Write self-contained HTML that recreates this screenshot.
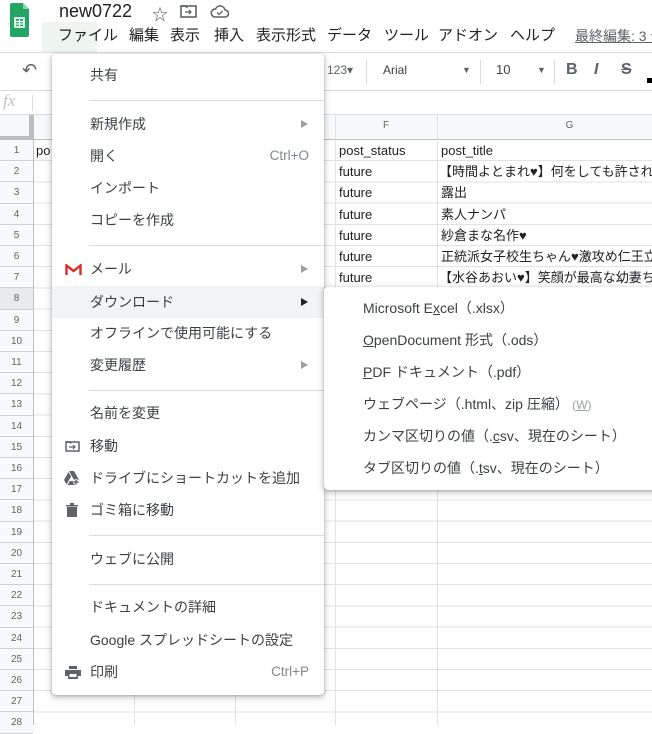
<!DOCTYPE html>
<html><head><meta charset="utf-8"><style>
*{margin:0;padding:0;box-sizing:border-box}
body{width:652px;height:725px;overflow:hidden;background:#fff;font-family:"Liberation Sans","Noto Sans CJK JP",sans-serif;position:relative;color:#202124}
.abs{position:absolute}
.mb{position:absolute;top:26px;font-size:15px;line-height:20px;white-space:nowrap;color:#202124}
.grid{position:absolute;left:0;top:140px;width:652px;height:585px;
background-image:repeating-linear-gradient(to bottom,transparent 0,transparent 20.2px,#e2e2e2 20.2px,#e2e2e2 21.2px);}
.vl{position:absolute;top:115px;bottom:0;width:1px;background:#e2e2e2}
.rn{position:absolute;left:0;width:33px;height:21.2px;line-height:21.2px;text-align:center;font-size:10px;color:#5f6368;background:#f8f9fa;border-bottom:1px solid #d0d0d0}
.cell{position:absolute;font-size:13px;line-height:21.2px;height:21.2px;white-space:nowrap;overflow:hidden}
.menu{position:absolute;left:52px;top:54px;width:272px;height:641px;background:#fff;box-shadow:0 2px 6px 2px rgba(60,64,67,.2),0 1px 2px rgba(60,64,67,.3);border-radius:4px}
.it{position:absolute;left:0;width:272px;height:32px;line-height:32px;font-size:14px;color:#3c4043;padding-left:38px}
.sc{position:absolute;right:15px;top:0;color:#80868b;font-size:13.5px}
.ar{position:absolute;right:16px;top:12px;width:0;height:0;border-left:7px solid #9aa0a6;border-top:4px solid transparent;border-bottom:4px solid transparent}
.sep{position:absolute;left:37px;right:0;height:1px;background:#dadce0}
.sub{position:absolute;left:324px;top:287px;width:340px;height:203px;background:#fff;box-shadow:0 2px 6px 2px rgba(60,64,67,.2),0 1px 2px rgba(60,64,67,.3);border-radius:4px}
.si{position:absolute;left:39px;font-size:14px;color:#3c4043;line-height:32px;white-space:nowrap}
u{text-decoration:underline}
</style></head><body>
<svg class="abs" style="left:10px;top:3px" width="19" height="34" viewBox="0 0 19 34"><path d="M2 0h11l6 6v26a2 2 0 0 1-2 2H2a2 2 0 0 1-2-2V2a2 2 0 0 1 2-2z" fill="#23a566"/><path d="M13 0l6 6h-6z" fill="#8ed1b1"/><rect x="5" y="15" width="9" height="9" fill="none" stroke="#fff" stroke-width="1.6"/><path d="M5 18.5h9M5 21h9M9.5 15v9" stroke="#fff" stroke-width="1.2"/></svg>
<div class="abs" style="left:59px;top:0px;font-size:18px;color:#202124;line-height:22px">new0722</div>
<div class="abs" style="left:152px;top:1px;font-size:16px;color:#5f6368">☆</div>
<svg class="abs" style="left:180px;top:4px" width="17" height="14"><rect x="1" y="2" width="15" height="11" fill="none" stroke="#5f6368" stroke-width="1.6"/><path d="M1 2h5l1 2" stroke="#5f6368" fill="none" stroke-width="1.6"/><path d="M5 8h6M9 6l2 2-2 2" stroke="#5f6368" fill="none" stroke-width="1.3"/></svg>
<svg class="abs" style="left:210px;top:4px" width="19" height="14"><path d="M5 13h10a3.5 3.5 0 0 0 0-7 5 5 0 0 0-9.5-1A4 4 0 0 0 5 13z" fill="none" stroke="#5f6368" stroke-width="1.6"/><path d="M7 8.5l2 2 3.5-3.5" stroke="#5f6368" fill="none" stroke-width="1.3"/></svg>
<div class="abs" style="left:42px;top:22px;width:55px;height:30px;background:#eef5f0"></div>
<div class="mb" style="left:58px">ファイル</div>
<div class="mb" style="left:129px">編集</div>
<div class="mb" style="left:170px">表示</div>
<div class="mb" style="left:214px">挿入</div>
<div class="mb" style="left:256px">表示形式</div>
<div class="mb" style="left:327px">データ</div>
<div class="mb" style="left:384px">ツール</div>
<div class="mb" style="left:438px">アドオン</div>
<div class="mb" style="left:510px">ヘルプ</div>
<div class="mb" style="left:575px;font-size:14px;color:#5f6368;text-decoration:underline">最終編集: 3 分前</div>
<div class="abs" style="left:0;top:52px;width:652px;height:1px;background:#dadce0"></div>
<div class="abs" style="left:22px;top:60px;font-size:18px;color:#5f6368">↶</div>
<div class="abs" style="left:327px;top:63px;font-size:12px;color:#5f6368">123▾</div>
<div class="abs" style="left:366px;top:60px;width:1px;height:24px;background:#dadce0"></div>
<div class="abs" style="left:383px;top:63px;font-size:12px;color:#3c4043">Arial</div>
<div class="abs" style="left:462px;top:65px;font-size:9px;color:#5f6368">▼</div>
<div class="abs" style="left:480px;top:60px;width:1px;height:24px;background:#dadce0"></div>
<div class="abs" style="left:496px;top:62px;font-size:13px;color:#3c4043">10</div>
<div class="abs" style="left:537px;top:65px;font-size:9px;color:#5f6368">▼</div>
<div class="abs" style="left:554px;top:60px;width:1px;height:24px;background:#dadce0"></div>
<div class="abs" style="left:566px;top:61px;font-size:16px;font-weight:bold;color:#5f6368">B</div>
<div class="abs" style="left:594px;top:61px;font-size:16px;font-style:italic;font-weight:bold;color:#5f6368">I</div>
<div class="abs" style="left:621px;top:61px;font-size:16px;font-weight:bold;color:#5f6368;text-decoration:line-through">S</div>
<div class="abs" style="left:647px;top:78px;width:5px;height:5px;background:#000"></div>
<div class="abs" style="left:0;top:90px;width:652px;height:1px;background:#dadce0"></div>
<div class="abs" style="left:3px;top:91px;font-size:17px;font-style:italic;color:#bdc1c6;font-family:'Liberation Serif',serif">fx</div>
<div class="abs" style="left:32px;top:95px;width:1px;height:16px;background:#dadce0"></div>
<div class="abs" style="left:0;top:114px;width:652px;height:1px;background:#dadce0"></div>
<div class="abs" style="left:0;top:115px;width:652px;height:25px;background:#f8f9fa;border-bottom:1px solid #c0c0c0"></div>
<div class="abs" style="left:29px;top:115px;width:4px;height:25px;background:#bdbdbd"></div>
<div class="abs" style="left:0;top:136px;width:33px;height:4px;background:#bdbdbd"></div>
<div class="abs" style="left:335px;top:120px;width:102px;text-align:center;font-size:10px;color:#5f6368">F</div>
<div class="abs" style="left:437px;top:120px;width:265px;text-align:center;font-size:10px;color:#5f6368">G</div>
<div class="grid"></div>
<div class="vl" style="left:33px;background:#c0c0c0"></div>
<div class="vl" style="left:134px"></div>
<div class="vl" style="left:235px"></div>
<div class="vl" style="left:335px"></div>
<div class="vl" style="left:437px"></div>
<div class="rn" style="top:140px">1</div><div class="rn" style="top:161.2px">2</div><div class="rn" style="top:182.4px">3</div><div class="rn" style="top:203.6px">4</div><div class="rn" style="top:224.8px">5</div><div class="rn" style="top:246px">6</div><div class="rn" style="top:267.2px">7</div><div class="rn" style="top:288.4px;background:#e8eaed">8</div><div class="rn" style="top:309.6px">9</div><div class="rn" style="top:330.8px">10</div><div class="rn" style="top:352px">11</div><div class="rn" style="top:373.2px">12</div><div class="rn" style="top:394.4px">13</div><div class="rn" style="top:415.6px">14</div><div class="rn" style="top:436.8px">15</div><div class="rn" style="top:458px">16</div><div class="rn" style="top:479.2px">17</div><div class="rn" style="top:500.4px">18</div><div class="rn" style="top:521.6px">19</div><div class="rn" style="top:542.8px">20</div><div class="rn" style="top:564px">21</div><div class="rn" style="top:585.2px">22</div><div class="rn" style="top:606.4px">23</div><div class="rn" style="top:627.6px">24</div><div class="rn" style="top:648.8px">25</div><div class="rn" style="top:670px">26</div><div class="rn" style="top:691.2px">27</div><div class="rn" style="top:712.4px">28</div>
<div class="cell" style="left:36px;top:140px">po</div>
<div class="cell" style="left:339px;top:140px">post_status</div>
<div class="cell" style="left:441px;top:140px">post_title</div>
<div class="cell" style="left:339px;top:161.2px">future</div><div class="cell" style="left:439px;top:161.2px;width:213px">【時間よとまれ♥】何をしても許され</div>
<div class="cell" style="left:339px;top:182.4px">future</div><div class="cell" style="left:441px;top:182.4px">露出</div>
<div class="cell" style="left:339px;top:203.6px">future</div><div class="cell" style="left:441px;top:203.6px">素人ナンパ</div>
<div class="cell" style="left:339px;top:224.8px">future</div><div class="cell" style="left:441px;top:224.8px">紗倉まな名作♥</div>
<div class="cell" style="left:339px;top:246px">future</div><div class="cell" style="left:441px;top:246px;width:211px">正統派女子校生ちゃん♥激攻め仁王立</div>
<div class="cell" style="left:339px;top:267.2px">future</div><div class="cell" style="left:439px;top:267.2px;width:213px">【水谷あおい♥】笑顔が最高な幼妻ち</div>
<div class="menu">
<div class="it" style="top:5px">共有</div>
<div class="sep" style="top:46px"></div>
<div class="it" style="top:54px">新規作成<span class="ar"></span></div>
<div class="it" style="top:86px">開く<span class="sc">Ctrl+O</span></div>
<div class="it" style="top:118px">インポート</div>
<div class="it" style="top:150px">コピーを作成</div>
<div class="sep" style="top:191px"></div>
<div class="it" style="top:199px"><svg class="abs" style="left:13px;top:11px" width="17" height="11"><path d="M1.5 11V1.5L8.5 7l7-5.5V11" fill="none" stroke="#d93025" stroke-width="2.4"/></svg>メール<span class="ar"></span></div>
<div class="it" style="top:232px;background:#f1f3f4">ダウンロード<span class="ar" style="border-left-color:#202124"></span></div>
<div class="it" style="top:263px">オフラインで使用可能にする</div>
<div class="it" style="top:295px">変更履歴<span class="ar"></span></div>
<div class="sep" style="top:336px"></div>
<div class="it" style="top:343px">名前を変更</div>
<div class="it" style="top:376px"><svg class="abs" style="left:13px;top:10px" width="15" height="12"><rect x="1" y="2" width="13" height="9" fill="none" stroke="#5f6368" stroke-width="1.5"/><path d="M1 2h4l1 1.5" stroke="#5f6368" fill="none" stroke-width="1.5"/><path d="M4 7h6M8 5l2 2-2 2" stroke="#5f6368" fill="none" stroke-width="1.2"/></svg>移動</div>
<div class="it" style="top:408px"><svg class="abs" style="left:12px;top:9px" width="16" height="14"><path d="M5 0h5l5 9h-5z M4.5 1l2.6 4.5-4.6 8L0 9z M6 10h6v4H3.5z" fill="#5f6368"/><path d="M12 8v6M9 11h6" stroke="#fff" stroke-width="3"/><path d="M12 8.5v5M9.5 11h5" stroke="#5f6368" stroke-width="1.5"/></svg>ドライブにショートカットを追加</div>
<div class="it" style="top:440px"><svg class="abs" style="left:14px;top:9px" width="12" height="14"><path d="M0 2h12v1.5H0zM4 0h4v2H4zM1 4h10v10H1z" fill="#5f6368"/></svg>ゴミ箱に移動</div>
<div class="sep" style="top:481px"></div>
<div class="it" style="top:489px">ウェブに公開</div>
<div class="sep" style="top:530px"></div>
<div class="it" style="top:537px">ドキュメントの詳細</div>
<div class="it" style="top:570px">Google スプレッドシートの設定</div>
<div class="it" style="top:602px"><svg class="abs" style="left:13px;top:10px" width="16" height="13"><path d="M4 0h8v3H4z M0 4h16v6h-3v3H3v-3H0z" fill="#5f6368"/><rect x="4.5" y="8" width="7" height="3" fill="#fff"/></svg>印刷<span class="sc">Ctrl+P</span></div>
</div>
<div class="sub">
<div class="si" style="top:5px">Microsoft E<u>x</u>cel（.xlsx）</div>
<div class="si" style="top:37px"><u>O</u>penDocument 形式（.ods）</div>
<div class="si" style="top:69px"><u>P</u>DF ドキュメント（.pdf）</div>
<div class="si" style="top:101px">ウェブページ（.html、zip 圧縮）<span style="font-size:12px;color:#9aa0a6"> (<u>W</u>)</span></div>
<div class="si" style="top:133px">カンマ区切りの値（.<u>c</u>sv、現在のシート）</div>
<div class="si" style="top:165px">タブ区切りの値（.<u>t</u>sv、現在のシート）</div>
</div>
</body></html>
